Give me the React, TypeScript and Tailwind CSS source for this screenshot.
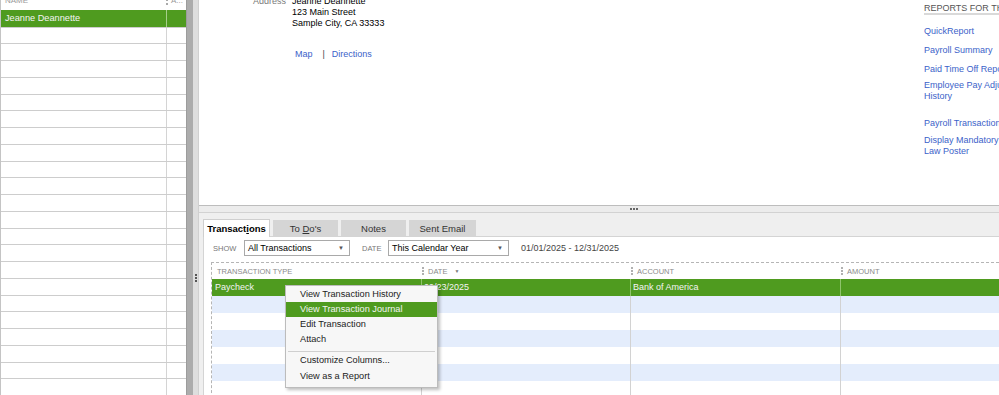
import React from 'react';

const green = 'bg-[#4f9b1f]';

const leftRows = Array.from({ length: 22 }, (_, i) => i);
const tableRows = Array.from({ length: 6 }, (_, i) => i);

function ColSep() {
  return <span className="mr-[4px] inline-block h-[8px] border-l-2 border-dotted border-[#b0b0b0]" />;
}

function Select({ label, width }: { label: string; width: string }) {
  return (
    <div className={`flex h-[16px] items-center justify-between border border-[#a9a9a9] bg-white pl-[3px] pr-[5px] text-[9px] text-black ${width}`}>
      <span>{label}</span>
      <span className="text-[6px] text-[#555]">▼</span>
    </div>
  );
}

export default function App() {
  return (
    <div className="relative flex h-[395px] w-[999px] overflow-hidden bg-white font-['Liberation_Sans',Arial,sans-serif] text-[9px] leading-[11px] text-[#222]">
      {/* name list */}
      <div className="flex w-[186px] shrink-0 flex-col border-l border-[#c4c4c4]">
        <div className="flex h-[10px] overflow-hidden text-[8px] leading-[10px] text-[#9a9a9a]">
          <div className="-mt-[4px] w-[165px] pl-[4px]">NAME</div>
          <div className="-mt-[4px] flex w-[20px] items-start">
            <span className="mt-[3px] mr-[3px] inline-block h-[6px] border-l-2 border-dotted border-[#aaa]" />
            A...
          </div>
        </div>
        <div className={`flex h-[17px] items-center ${green} text-[9.2px] text-[#f4f4f4]`}>
          <div className="flex h-full w-[166px] items-center border-r border-[#a6cf8a] pl-[4px]">Jeanne Deannette</div>
        </div>
        {leftRows.map((r) => (
          <div key={r} className="flex h-[17px] border-t border-[#cdcdcd]">
            <div className="w-[166px] border-r border-[#d4d4d4]" />
          </div>
        ))}
      </div>

      {/* vertical splitter */}
      <div className="flex w-[12px] shrink-0">
        <div className="w-[7px] border-l border-[#9c9c9c] bg-[#acacac]" />
        <div className="flex w-[5px] flex-col items-center bg-[#dedede] pt-[274px]">
          <div className="flex flex-col gap-[1px]">
            <span className="h-[2px] w-[2px] bg-[#555]" />
            <span className="h-[2px] w-[2px] bg-[#555]" />
            <span className="h-[2px] w-[2px] bg-[#555]" />
          </div>
        </div>
      </div>

      {/* right side */}
      <div className="flex min-w-0 flex-1 flex-col border-l border-[#d0d0d0]">
        <div className="flex h-[205px] shrink-0 overflow-hidden">
          <div className="flex-1 pl-[54px]">
            <div className="-mt-[4px] flex">
              <div className="w-[39px] pr-[7px] text-right text-[#7a7a7a]">Address</div>
              <div className="text-[9px] text-black">
                <div>Jeanne Deannette</div>
                <div>123 Main Street</div>
                <div>Sample City, CA 33333</div>
                <div className="mt-[20px] flex pl-[3px] text-[#3b62c9]">
                  <span>Map</span>
                  <span className="ml-[10px] text-[#444]">|</span>
                  <span className="ml-[7px]">Directions</span>
                </div>
              </div>
            </div>
          </div>
          <div className="w-[75px] shrink-0 whitespace-nowrap pt-[3px] text-[9px] text-[#3b62c9]">
            <div className="h-[12px] border-b-2 border-[#d9d9d9] text-[#555]">REPORTS FOR THIS EMPLOYEE</div>
            <div className="mt-[11px]">QuickReport</div>
            <div className="mt-[8px]">Payroll Summary</div>
            <div className="mt-[8px]">Paid Time Off Report</div>
            <div className="mt-[5px]">
              Employee Pay Adjustments
              <br />
              History
            </div>
            <div className="mt-[16px]">Payroll Transactions</div>
            <div className="mt-[6px]">
              Display Mandatory Payroll
              <br />
              Law Poster
            </div>
          </div>
        </div>

        {/* horizontal splitter */}
        <div className="flex h-[7px] shrink-0 items-center border-t border-[#bdbdbd] bg-[#ececec]">
          <div className="ml-[431px] flex gap-[1px]">
            <span className="h-[2px] w-[2px] bg-[#666]" />
            <span className="h-[2px] w-[2px] bg-[#666]" />
            <span className="h-[2px] w-[2px] bg-[#666]" />
          </div>
        </div>

        {/* bottom panel */}
        <div className="flex flex-1 flex-col border-t border-[#d2d2d2] bg-[#efefef] pl-[4px] pt-[6px]">
          <div className="relative z-10 flex h-[17px] items-end gap-[3px] text-[9.5px]">
            <div className="-mb-px flex h-[18px] w-[67px] items-center justify-center border border-b-0 border-[#cfcfcf] bg-white pb-px font-bold text-black">
              <span>
                Transact<span className="underline">i</span>ons
              </span>
            </div>
            <div className="flex h-[16px] w-[65px] items-center justify-center bg-[#d5d5d5] text-[#333]">
              <span>
                To <span className="underline">D</span>o's
              </span>
            </div>
            <div className="flex h-[16px] w-[65px] items-center justify-center bg-[#d5d5d5] text-[#333]">Notes</div>
            <div className="flex h-[16px] w-[67px] items-center justify-center bg-[#d5d5d5] text-[#333]">Sent Email</div>
          </div>
          <div className="flex flex-1 flex-col border-l border-t border-[#d4d4d4] bg-white">
            <div className="mt-[3px] flex h-[16px] items-center pl-[9px]">
              <span className="w-[31px] text-[7.5px] text-[#777]">SHOW</span>
              <Select label="All Transactions" width="w-[106px]" />
              <span className="ml-[12px] w-[26px] text-[7.5px] text-[#777]">DATE</span>
              <Select label="This Calendar Year" width="w-[121px]" />
              <span className="ml-[12px] text-[9px] text-[#444]">01/01/2025 - 12/31/2025</span>
            </div>

            <div className="ml-[7px] mt-[6px] flex flex-col border-l border-t border-dashed border-[#b5b5b5]">
              <div className="flex h-[16px] items-center text-[7.5px] text-[#8a8a8a]">
                <div className="w-[210px] pl-[5px]">TRANSACTION TYPE</div>
                <div className="flex w-[209px] items-center">
                  <ColSep />
                  DATE
                  <span className="ml-[7px] text-[5px] text-[#777]">▼</span>
                </div>
                <div className="flex w-[210px] items-center">
                  <ColSep />
                  ACCOUNT
                </div>
                <div className="flex flex-1 items-center">
                  <ColSep />
                  AMOUNT
                </div>
              </div>
              <div className={`flex h-[17px] items-center ${green} text-[9px] text-[#f4f4f4]`}>
                <div className="flex h-full w-[210px] items-center border-r border-[#8fc46c] pl-[3px]">Paycheck</div>
                <div className="flex h-full w-[209px] items-center border-r border-[#8fc46c] pl-[2px]">09/23/2025</div>
                <div className="flex h-full w-[210px] items-center border-r border-[#8fc46c] pl-[2px]">Bank of America</div>
                <div className="flex-1" />
              </div>
              {tableRows.map((r) => (
                <div key={r} className={`flex h-[17px] ${r % 2 === 0 ? 'bg-[#e4edfc]' : 'bg-white'}`}>
                  <div className="w-[210px] border-r border-[#d2d2d2]" />
                  <div className="w-[209px] border-r border-[#d2d2d2]" />
                  <div className="w-[210px] border-r border-[#d2d2d2]" />
                  <div className="flex-1" />
                </div>
              ))}
            </div>
          </div>
        </div>
      </div>

      {/* context menu */}
      <div className="absolute left-[285px] top-[285px] w-[153px] border border-[#bcbcbc] bg-[#f7f7f7] pb-[3px] pt-[1px] text-[9.2px] text-[#222] shadow-[2px_2px_3px_rgba(0,0,0,0.25)]">
        <div className="flex h-[15px] items-center pl-[14px]">View Transaction History</div>
        <div className={`flex h-[15px] items-center pl-[14px] ${green} text-[#f4f4f4]`}>View Transaction Journal</div>
        <div className="flex h-[15px] items-center pl-[14px]">Edit Transaction</div>
        <div className="flex h-[15px] items-center pl-[14px]">Attach</div>
        <div className="mx-[2px] mb-[1px] mt-[4px] border-t border-[#cfcfcf]" />
        <div className="flex h-[15px] items-center pl-[14px]">Customize Columns...</div>
        <div className="flex h-[16px] items-end pb-[2px] pl-[14px]">View as a Report</div>
      </div>
    </div>
  );
}
